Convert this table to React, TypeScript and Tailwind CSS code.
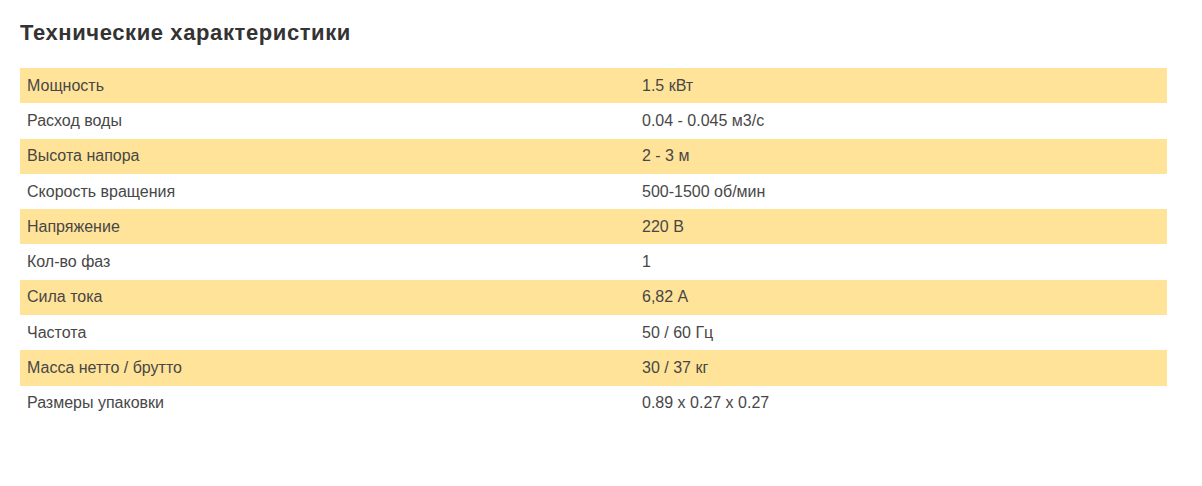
import React from 'react';

const specs: [string, string][] = [
  ['Мощность', '1.5 кВт'],
  ['Расход воды', '0.04 - 0.045 м3/с'],
  ['Высота напора', '2 - 3 м'],
  ['Скорость вращения', '500-1500 об/мин'],
  ['Напряжение', '220 В'],
  ['Кол-во фаз', '1'],
  ['Сила тока', '6,82 А'],
  ['Частота', '50 / 60 Гц'],
  ['Масса нетто / брутто', '30 / 37 кг'],
  ['Размеры упаковки', '0.89 x 0.27 x 0.27'],
];

const App = () => {
  return (
    <div className="w-[1202px] h-[486px] bg-white pl-5 pt-[19px] font-['Liberation_Sans',Arial,sans-serif]">
      <h2 className="text-[22px] leading-[28px] font-bold tracking-[0.6px] text-[#333333] mb-[21px]">
        Технические характеристики
      </h2>

      <div className="w-[1147px]">
        {specs.map(([name, value], i) => (
          <div
            key={name}
            className={`flex h-[35.3px] items-center text-[16px] text-[#474747] ${
              i % 2 === 0 ? 'bg-[#ffe398]' : 'bg-white'
            }`}
          >
            <div className="w-[615px] pl-[7px]">{name}</div>
            <div className="pl-[7px]">{value}</div>
          </div>
        ))}
      </div>
    </div>
  );
};

export default App;
